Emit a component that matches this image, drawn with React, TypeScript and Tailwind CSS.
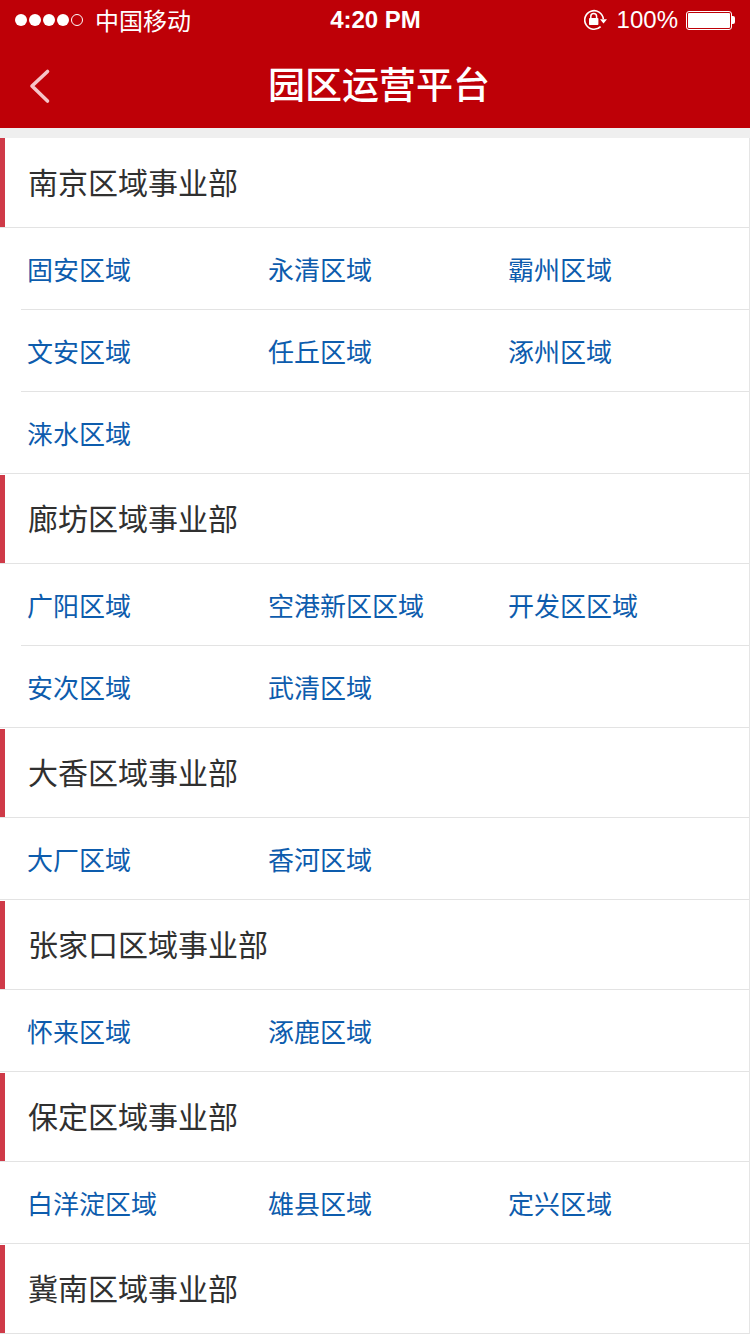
const cjk = "font-['Noto_Sans_CJK_SC','Liberation_Sans',sans-serif]";

const groups = [
  {
    name: "南京区域事业部",
    rows: [
      ["固安区域", "永清区域", "霸州区域"],
      ["文安区域", "任丘区域", "涿州区域"],
      ["涞水区域"],
    ],
  },
  {
    name: "廊坊区域事业部",
    rows: [
      ["广阳区域", "空港新区区域", "开发区区域"],
      ["安次区域", "武清区域"],
    ],
  },
  {name: "大香区域事业部", rows: [["大厂区域", "香河区域"]]},
  {name: "张家口区域事业部", rows: [["怀来区域", "涿鹿区域"]]},
  {name: "保定区域事业部", rows: [["白洋淀区域", "雄县区域", "定兴区域"]]},
  {name: "冀南区域事业部", rows: []},
];

function LockIcon() {
  return (
    <svg width="24" height="22" viewBox="0 0 24 22" fill="none" className="mr-[9px]">
      <path d="M19.3 10A9.3 9.3 0 1 0 16.6 17.6" stroke="#fff" strokeWidth="1.6" />
      <path d="M16 10.2h7l-3.5 4.2z" fill="#fff" />
      <path d="M6.8 9V7.4a2.9 2.9 0 0 1 5.8 0V9" stroke="#fff" strokeWidth="1.5" />
      <rect x="5" y="9" width="9.4" height="7" rx="0.8" fill="#fff" />
    </svg>
  );
}

function Battery() {
  return (
    <div className="flex items-center">
      <div className="w-[46px] h-[19px] border border-white rounded-[3px] p-px">
        <div className="w-full h-full bg-white rounded-[1px]" />
      </div>
      <div className="w-[3px] h-[8px] bg-white rounded-r-[2px]" />
    </div>
  );
}

function StatusBar() {
  return (
    <div className="h-10 pl-[15px] pr-[15px] grid grid-cols-[1fr_auto_1fr] items-center text-white">
      <div className="flex items-center">
        <div className="flex gap-[2px]">
          {[0, 1, 2, 3].map((i) => (
            <div key={i} className="w-3 h-3 rounded-full bg-white" />
          ))}
          <div className="w-3 h-3 rounded-full border border-white" />
        </div>
        <span className={`ml-3 -mt-px text-[24px] leading-none ${cjk}`}>中国移动</span>
      </div>
      <span className="ml-px text-[24px] leading-none font-bold font-['Liberation_Sans',sans-serif]">4:20 PM</span>
      <div className="flex items-center justify-end">
        <LockIcon />
        <span className="text-[24px] leading-none mr-[8px] font-medium font-['Liberation_Sans',sans-serif]">100%</span>
        <Battery />
      </div>
    </div>
  );
}

function NavBar() {
  return (
    <div className="h-[88px] pl-[28px] grid grid-cols-[240px_auto_1fr] items-center text-white">
      <svg width="24" height="36" viewBox="0 0 24 36" fill="none" className="mt-[3px]">
        <path d="M19.5 3.5 4 18l15.5 15" stroke="#f6c4c8" strokeWidth="3.6" strokeLinecap="round" strokeLinejoin="round" />
      </svg>
      <h1 className={`-mt-[2px] text-[37px] leading-none font-medium ${cjk}`}>园区运营平台</h1>
      <div />
    </div>
  );
}

export default function App() {
  return (
    <div className={`w-[750px] h-[1334px] overflow-hidden bg-white ${cjk}`}>
      <div className="bg-[#be0007]">
        <StatusBar />
        <NavBar />
      </div>
      <div className="h-[10px] bg-[#efefef]" />
      <div className="border-r border-[#e5e5e5]">
        {groups.map((group, g) => (
          <section key={group.name}>
            <div className={`h-[90px] flex border-b border-[#e3e3e3] ${g > 0 ? "pt-px" : ""}`}>
              <div className="w-[5px] bg-[#cf3a48]" />
              <div className={`pl-[23px] pb-[3px] flex-1 flex items-center text-[30px] leading-none text-[#303030] ${g > 0 ? "-mt-px" : ""}`}>
                {group.name}
              </div>
            </div>
            {group.rows.map((row, r) => {
              const last = r === group.rows.length - 1;
              return (
                <div key={r} className={last ? "border-b border-[#e3e3e3]" : "pl-[21px]"}>
                  <div
                    className={`grid grid-cols-[241px_240px_1fr] items-center text-[26px] leading-none text-[#0d5cad] ${
                      last ? "h-[81px] pl-[27px]" : "h-[82px] pl-[6px] border-b border-[#e3e3e3]"
                    }`}
                  >
                    {row.map((item) => (
                      <span key={item}>{item}</span>
                    ))}
                  </div>
                </div>
              );
            })}
          </section>
        ))}
      </div>
    </div>
  );
}
